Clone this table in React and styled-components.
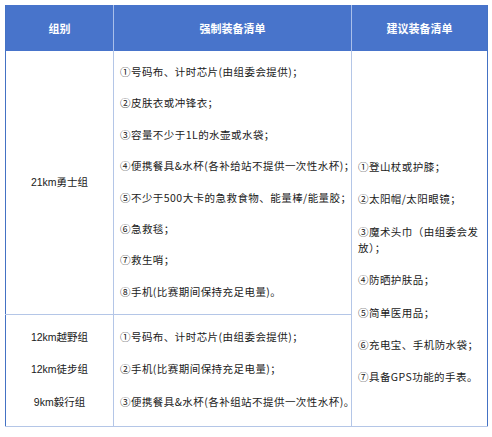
import React from "react";
import styled, { createGlobalStyle } from "styled-components";

const Global = createGlobalStyle`
  html, body { margin: 0; padding: 0; background: #ffffff; }
  body { font-family: "Liberation Sans", "Noto Sans CJK SC", sans-serif; }
`;

const Page = styled.div`
  padding: 5px 0 0 5px;
`;

const Table = styled.table`
  width: 482px;
  border-collapse: collapse;
  table-layout: fixed;
  font-size: 10.5px;
  color: #1a1a1a;
  border-left: 1px solid #4472c4;
  border-right: 1px solid #4472c4;
`;

const HeadCell = styled.th`
  height: 46px;
  padding: 0;
  background: #4874cb;
  color: #ffffff;
  font-weight: bold;
  font-size: 11px;
  text-align: center;
  vertical-align: middle;
  border-left: 1px solid #a9bfea;
  &:first-child { border-left: none; }
`;

const Cell = styled.td`
  padding: ${(p) => p.$pad || "0 6px"};
  vertical-align: ${(p) => p.$valign || "middle"};
  text-align: ${(p) => (p.$center ? "center" : "left")};
  border-left: 1px solid #b4c6e7;
  border-bottom: 1px solid #b4c6e7;
  &:first-child { border-left: none; }
`;

const List = styled.div`
  display: flex;
  flex-direction: column;
  gap: ${(p) => p.$gap}px;
`;

const Item = styled.div`
  line-height: 16px;
  white-space: ${(p) => (p.$wrap ? "normal" : "nowrap")};
  font-family: ${(p) =>
    p.$latin
      ? '"Liberation Sans", "Noto Sans CJK SC", sans-serif'
      : '"Noto Sans CJK SC", sans-serif'};
  letter-spacing: ${(p) => (p.$latin ? "0" : "0.45px")};
`;

const row1 = [
  "①号码布、计时芯片(由组委会提供)；",
  "②皮肤衣或冲锋衣；",
  "③容量不少于1L的水壶或水袋；",
  "④便携餐具&水杯(各补给站不提供一次性水杯)；",
  "⑤不少于500大卡的急救食物、能量棒/能量胶；",
  "⑥急救毯；",
  "⑦救生哨；",
  "⑧手机(比赛期间保持充足电量)。",
];

const row2 = [
  "①号码布、计时芯片(由组委会提供)；",
  "②手机(比赛期间保持充足电量)；",
  "③便携餐具&水杯(各补组站不提供一次性水杯)。",
];

const groups2 = ["12km越野组", "12km徒步组", "9km毅行组"];

const suggested = [
  "①登山杖或护膝；",
  "②太阳帽/太阳眼镜；",
  "③魔术头巾（由组委会发放）；",
  "④防晒护肤品；",
  "⑤简单医用品；",
  "⑥充电宝、手机防水袋；",
  "⑦具备GPS功能的手表。",
];

export default function App() {
  return (
    <Page>
      <Global />
      <Table>
        <colgroup>
          <col style={{ width: 108 }} />
          <col style={{ width: 238 }} />
          <col style={{ width: 136 }} />
        </colgroup>
        <thead>
          <tr>
            <HeadCell>组别</HeadCell>
            <HeadCell>强制装备清单</HeadCell>
            <HeadCell>建议装备清单</HeadCell>
          </tr>
        </thead>
        <tbody>
          <tr>
            <Cell $center>
              <Item $latin>21km勇士组</Item>
            </Cell>
            <Cell $pad="13px 6px 14px">
              <List $gap={15.4}>
                {row1.map((t) => (
                  <Item key={t}>{t}</Item>
                ))}
              </List>
            </Cell>
            <Cell rowSpan={2} $valign="top" $pad="108px 6px 0">
              <List $gap={16.4}>
                {suggested.map((t) => (
                  <Item key={t} $wrap>
                    {t}
                  </Item>
                ))}
              </List>
            </Cell>
          </tr>
          <tr>
            <Cell $center $pad="14px 6px 16px">
              <List $gap={16.5}>
                {groups2.map((t) => (
                  <Item key={t} $latin>
                    {t}
                  </Item>
                ))}
              </List>
            </Cell>
            <Cell $pad="14px 6px 16px">
              <List $gap={16.5}>
                {row2.map((t) => (
                  <Item key={t}>{t}</Item>
                ))}
              </List>
            </Cell>
          </tr>
        </tbody>
      </Table>
    </Page>
  );
}
